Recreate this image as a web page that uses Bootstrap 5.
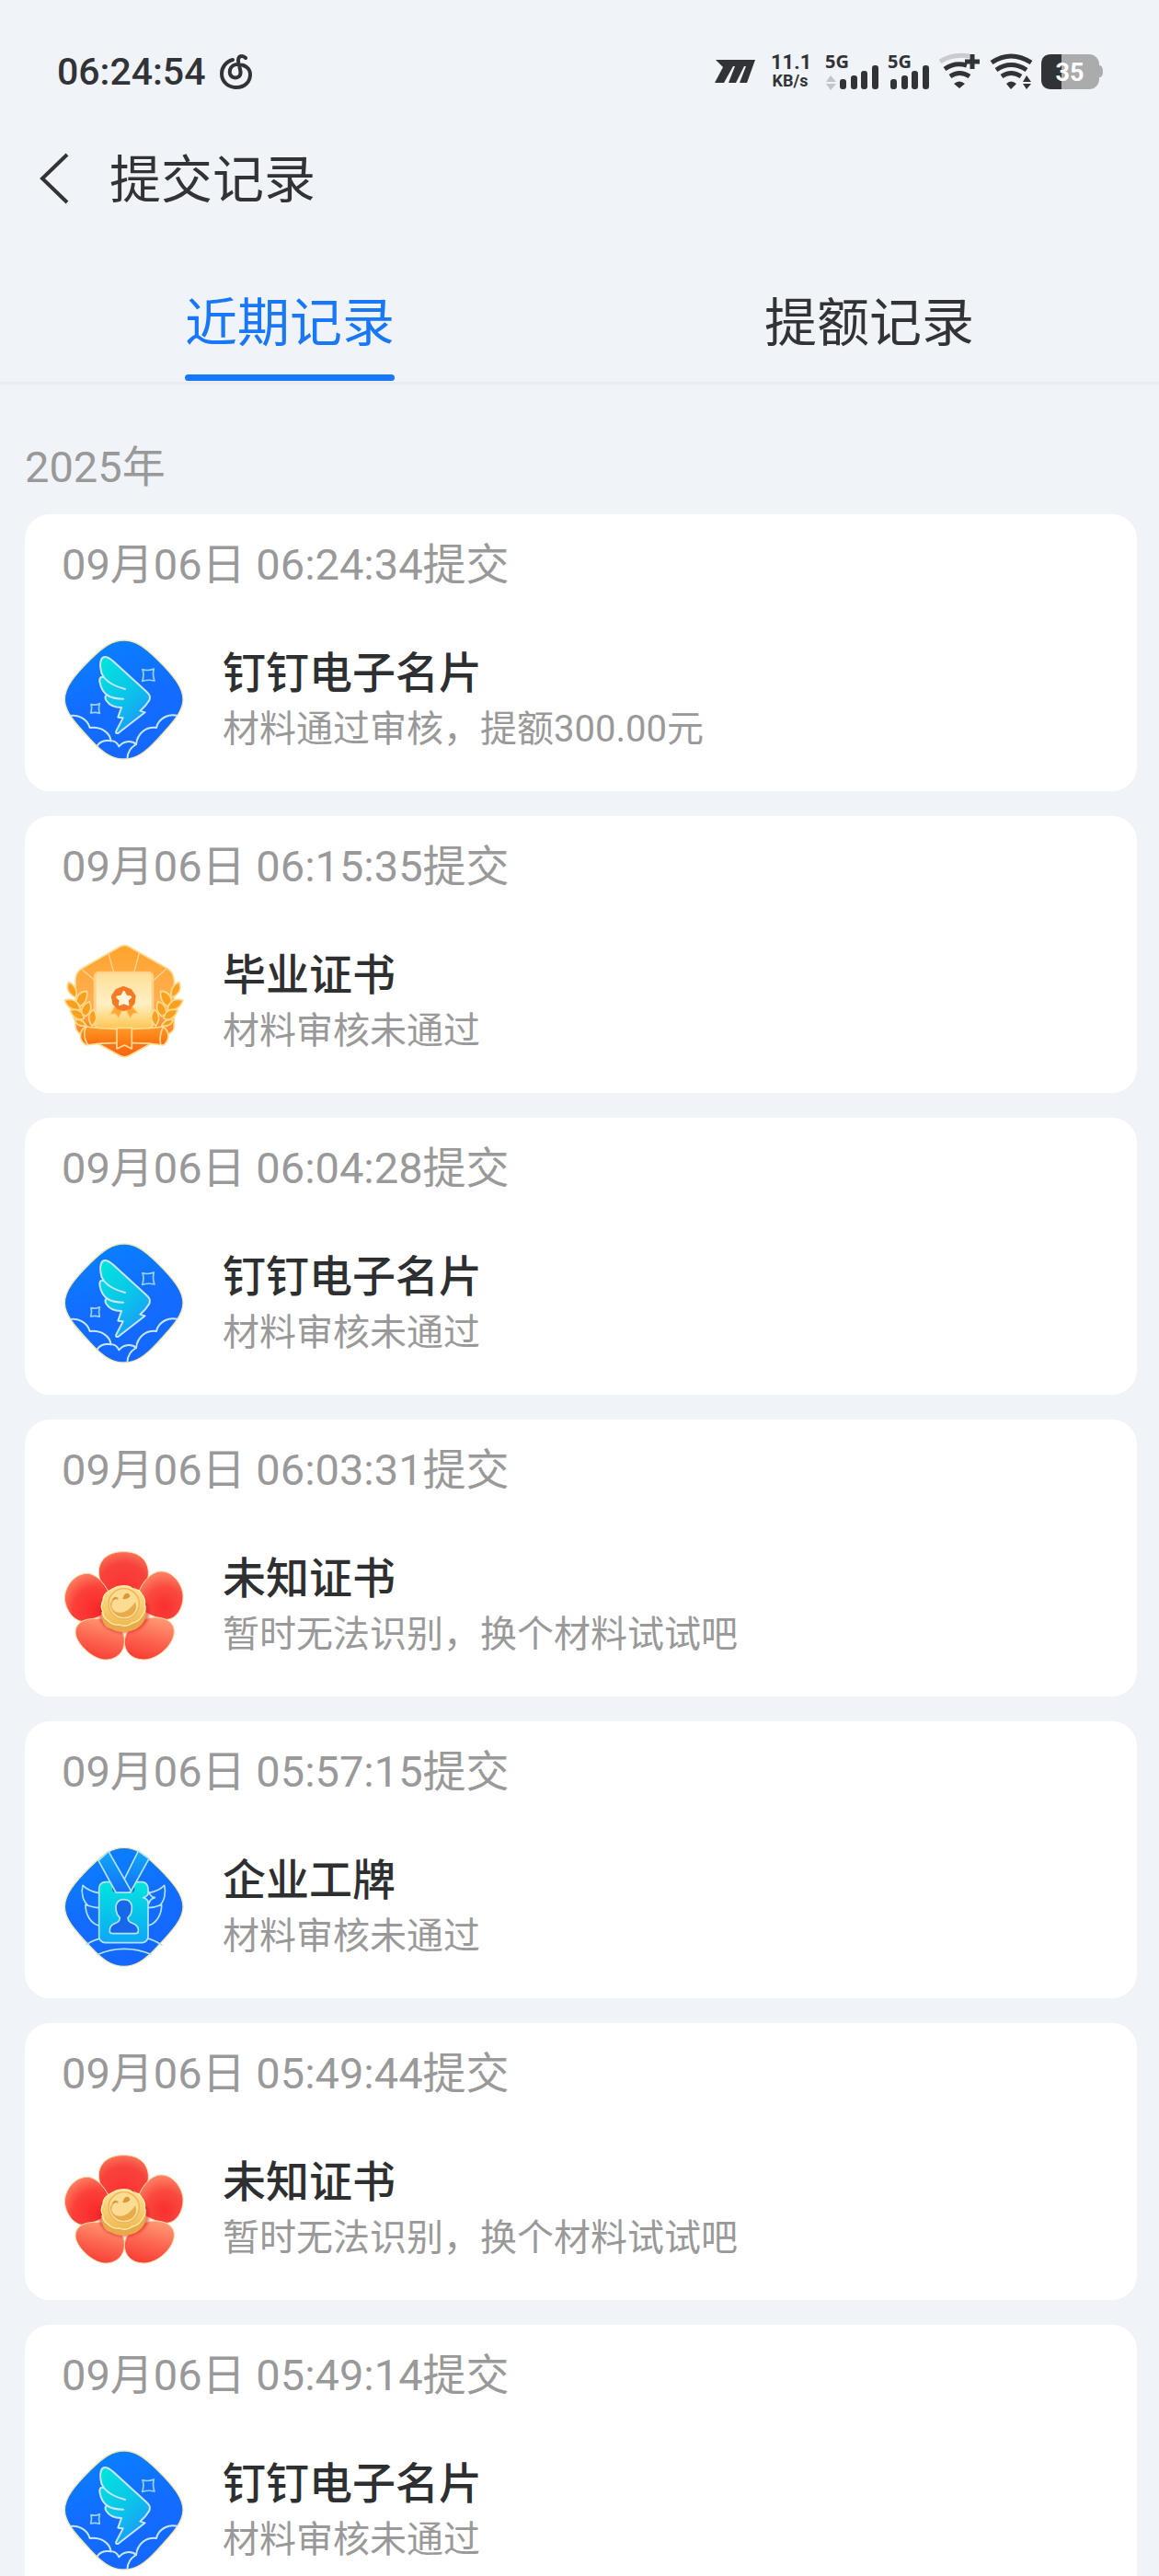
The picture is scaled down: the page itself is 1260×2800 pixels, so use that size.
<!DOCTYPE html>
<html lang="zh-CN">
<head>
<meta charset="utf-8">
<meta name="viewport" content="width=device-width, initial-scale=1">
<title>提交记录</title>
<link href="https://cdn.jsdelivr.net/npm/bootstrap@5.3.0/dist/css/bootstrap.min.css" rel="stylesheet">
<style>
  :root { --ink: #323336; --soft: #999; --page: #f0f3f8; --brand: #1878f8; }
  body { background: var(--page); color: var(--ink); font-family: Roboto, "Noto Sans CJK SC", sans-serif; }
  .screen { height: 100vh; }
  .status-bar { padding: 54px 64px 42px 62px; line-height: 48px; }
  .clock { font-size: 41px; font-weight: 500; }
  .status-bar svg { display: block; }
  .rate { font-weight: 700; line-height: 20px; width: 42px; }
  .rate-num { font-size: 22px; }
  .rate-unit { font-size: 18px; }
  .app-bar { height: 100px; padding-left: 42px; gap: 42px; }
  .app-title { font-size: 56px; line-height: 80px; padding-top: 4px; font-weight: 400; }
  .back-btn { line-height: 0; color: inherit; }
  .tab-strip { border-bottom: 3px solid #eaecf2; padding-bottom: 1px; }
  .tab-strip .nav-link { font-size: 57px; line-height: 80px; padding: 68px 0 15px; border-radius: 0; color: var(--ink); background: none; position: relative; }
  .tab-strip .nav-link.active { color: var(--brand); background: none; }
  .tab-strip .nav-item { padding-bottom: 7px; }
  .tab-strip .nav-link.active::after { content: ""; position: absolute; left: 0; right: 0; top: 100%; height: 7px; border-radius: 4px; background: var(--brand); }
  .records { padding: 58px 24px 27px 27px; scrollbar-width: none; }
  .records::-webkit-scrollbar { display: none; }
  .year-label { font-size: 47px; line-height: 64px; margin-bottom: 19px; color: var(--soft); font-weight: 400; }
  .record-list { gap: 27px; }
  .record { border: 0; border-radius: 27px; padding: 23px 40px 33px; }
  .record-time { font-size: 47px; line-height: 64px; margin-bottom: 47px; color: var(--soft); }
  .record-body { gap: 41px; }
  .record-text { padding-top: 4px; }
  .record-icon { width: 134px; height: 134px; flex: none; }
  .record-name { font-size: 47px; line-height: 61px; font-weight: 500; color: #2e2f31; margin: 0; }
  .record-note { font-size: 40px; line-height: 61px; color: var(--soft); margin: 0; }
</style>
</head>
<body>
<svg width="0" height="0" class="position-absolute" aria-hidden="true">
  <defs>
    <linearGradient id="gBlue" x1="0" y1="0" x2=".3" y2="1"><stop offset="0" stop-color="#0684ff"/><stop offset=".55" stop-color="#126eff"/><stop offset="1" stop-color="#1468ff"/></linearGradient>
    <linearGradient id="gWing" x1="0" y1="0" x2=".6" y2="1"><stop offset="0" stop-color="#02e6dc"/><stop offset=".6" stop-color="#0bc4ea"/><stop offset="1" stop-color="#1a9cf6"/></linearGradient>
    <linearGradient id="gBadge" x1="0" y1="0" x2="0" y2="1"><stop offset="0" stop-color="#00e5dc"/><stop offset="1" stop-color="#0fa6f8"/></linearGradient>
    <linearGradient id="gStrap" x1="0" y1="0" x2="0" y2="1"><stop offset="0" stop-color="#12a8f6"/><stop offset="1" stop-color="#1470f8"/></linearGradient>
    <linearGradient id="gHex" x1="0" y1="0" x2="0" y2="1"><stop offset="0" stop-color="#ffa42c"/><stop offset=".5" stop-color="#ffae52"/><stop offset="1" stop-color="#f9640c"/></linearGradient>
    <linearGradient id="gPaper" x1="0" y1="0" x2="0" y2="1"><stop offset="0" stop-color="#ffdf98"/><stop offset=".55" stop-color="#fff0c4"/><stop offset="1" stop-color="#ffc650"/></linearGradient>
    <linearGradient id="gRoll" x1="0" y1="0" x2="0" y2="1"><stop offset="0" stop-color="#ff9a26"/><stop offset="1" stop-color="#fb6f0c"/></linearGradient>
    <radialGradient id="gPetalTop" cx=".5" cy=".75" r=".8"><stop offset="0" stop-color="#fc3434"/><stop offset=".6" stop-color="#f8423c"/><stop offset="1" stop-color="#fb7a5c"/></radialGradient>
    <radialGradient id="gPetalL" cx=".65" cy=".75" r=".85"><stop offset="0" stop-color="#f92a2c"/><stop offset=".55" stop-color="#fb403a"/><stop offset="1" stop-color="#fd8c66"/></radialGradient>
    <radialGradient id="gPetalR" cx=".6" cy=".75" r=".85"><stop offset="0" stop-color="#f92e2f"/><stop offset=".5" stop-color="#fa4a40"/><stop offset="1" stop-color="#fd9a74"/></radialGradient>
    <linearGradient id="gPetalLow" x1=".6" y1="0" x2=".3" y2="1"><stop offset="0" stop-color="#ff9874"/><stop offset=".5" stop-color="#fc6650"/><stop offset="1" stop-color="#f83c34"/></linearGradient>
    <linearGradient id="gCoin" x1="0" y1="0" x2="0" y2="1"><stop offset="0" stop-color="#ffe496"/><stop offset="1" stop-color="#f0b850"/></linearGradient>
    <filter id="soften" x="-10%" y="-10%" width="120%" height="120%"><feGaussianBlur stdDeviation="5"/></filter>

    <path id="rhomb" d="M224 33C262 33 290 53 333 95C385 146 417 186 417 226C417 264 386 300 333 356C292 401 262 420 224 420C186 420 156 401 115 356C62 300 31 264 31 226C31 186 63 146 115 95C158 53 186 33 224 33Z"/>
    <clipPath id="rhombClip"><use href="#rhomb"/></clipPath>

    <symbol id="icWing" viewBox="21 24 402 402">
      <use href="#rhomb" fill="url(#gBlue)" stroke="#f4e8b4" stroke-width="4"/>
      <g fill="none" stroke="#c8e6fa" stroke-width="6" stroke-linejoin="round" stroke-linecap="round">
        <g clip-path="url(#rhombClip)">
          <path d="M40 281C72 272 104 288 113 318C150 314 180 334 181 361C192 360 202 367 208 379C222 361 248 358 264 372"/>
          <path d="M136 382C140 364 160 358 181 361"/>
          <path d="M235 424C234 400 244 384 264 372C268 336 296 314 330 318C338 286 370 268 412 282"/>
        </g>
        <path fill="url(#gWing)" d="M164 87C150 86 145 104 148 124C149 137 153 146 158 153C146 150 143 160 146 172C150 191 159 204 170 212C163 212 161 219 166 228C176 245 194 252 216 252L205 284L221 286L199 329C196 337 202 338 208 334L293 268L277 263C289 253 300 240 307 228C312 215 307 209 296 199L190 102C180 93 172 88 164 87Z"/>
        <path d="M158 153C174 174 198 184 228 192M170 212C184 222 204 224 222 224"/>
        <path stroke="#9fd0fa" stroke-width="5" d="M285 128Q303 134 322 126Q316 145 324 165Q304 160 284 166Q291 147 285 128ZM117 242Q131 246 145 239Q140 255 145 271Q130 266 116 270Q121 256 117 242Z"/>
      </g>
    </symbol>

    <symbol id="icPass" viewBox="21 32 402 402">
      <g transform="translate(0 9)"><use href="#rhomb" fill="url(#gBlue)" stroke="#f4e8b4" stroke-width="4"/></g>
      <g fill="none" stroke="#b4e4f4" stroke-width="5" stroke-linejoin="round" stroke-linecap="round">
        <path d="M101 358C120 346 138 339 158 336M348 360C332 348 312 340 293 336M140 390C192 366 258 366 312 390"/>
        <path d="M143 190C122 186 103 178 90 165C83 190 91 218 108 231M143 238C126 238 112 233 99 228C98 262 118 290 143 296M303 190C325 186 343 178 356 165C363 190 355 218 340 231M303 238C320 238 336 233 347 228C348 262 328 290 303 296"/>
        <rect x="143" y="154" width="160" height="198" rx="20" fill="url(#gBadge)"/>
        <path fill="#1761dc" d="M186 172Q184 188 199 188H247Q261 188 259 172Z" stroke="none"/>
        <path fill="url(#gStrap)" d="M271 53L306 78L245 188H204Z"/>
        <path fill="url(#gStrap)" d="M141 84L174 54L248 184L240 188H198Z"/>
        <path fill="#1767ea" d="M224 211C207 211 197 222 198 240C199 256 204 264 211 270C211 282 205 285 194 289C181 294 177 303 178 316Q179 322 188 322H262Q271 322 271 314C272 302 266 294 254 289C243 285 237 282 237 270C245 264 250 256 250 240C251 222 241 211 224 211Z"/>
        <path fill="#1478f6" d="M306 186Q309 202 325 205Q309 209 306 224Q302 209 287 205Q302 202 306 186Z"/>
      </g>
    </symbol>

    <symbol id="icDiploma" viewBox="21 33 402 402">
      <path d="M211 57Q226 49 241 57L366 128Q386 140 388 166V320Q386 334 368 343L242 412Q226 421 210 412L84 343Q68 334 66 316V166Q66 142 84 130Z" fill="url(#gHex)" stroke="#ffdc90" stroke-width="5"/>
      <path d="M174 78L190 138M274 78L258 138M88 132L128 166M362 130L322 166" stroke="#ffd48c" stroke-width="4"/>
      <rect x="125" y="137" width="197" height="190" rx="18" fill="#ffd288"/>
      <rect x="134" y="144" width="180" height="180" rx="14" fill="url(#gPaper)"/>
      <path fill="#ffa638" stroke="#ffd277" stroke-width="4" stroke-linejoin="round" d="M194 252L178 278L196 276L206 292L220 262ZM252 252L270 274L254 276L244 291L230 262Z"/>
      <path fill="#f57a24" stroke="#f57a24" stroke-width="8" stroke-linejoin="round" d="M223 190L246 199L259 218L256 241L242 257L223 263L204 257L190 241L187 218L200 199Z"/>
      <path fill="#fff6dc" stroke="#fff6dc" stroke-width="7" stroke-linejoin="round" d="M224 204L231 218L246 221L235 232L238 246L224 240L210 246L213 232L202 221L217 218Z"/>
      <g id="laurel" fill="#fb9f1e" stroke="#ffd98c" stroke-width="5" stroke-linejoin="round">
        <path d="M84 316Q64 304 58 282Q80 286 92 302Z"/>
        <path d="M102 316Q68 318 64 296Q86 288 102 316Z"/>
        <path d="M68 223Q30 205 44 172Q76 188 68 223Z"/>
        <path d="M68 236Q72 202 104 202Q108 234 82 252Z"/>
        <path d="M82 262Q44 270 31 232Q72 220 82 262Z"/>
        <path d="M86 276Q82 246 112 236Q126 264 100 284Z"/>
        <path d="M94 292Q64 302 48 264Q88 254 94 292Z"/>
        <path d="M120 316Q98 284 124 262Q146 292 120 316Z"/>
      </g>
      <use href="#laurel" transform="translate(448 0) scale(-1 1)"/>
      <path fill="url(#gRoll)" stroke="#ffdc94" stroke-width="5" stroke-linejoin="round" d="M100 318Q150 325 198 325H252Q304 325 352 318Q369 330 369 348Q368 366 354 378Q304 371 252 371H198Q150 371 100 378Q82 366 82 348Q82 326 100 318Z"/>
      <path fill="none" stroke="#ffdc94" stroke-width="5" d="M100 318Q88 348 106 377M352 318Q338 348 344 377"/>
      <path fill="url(#gRoll)" stroke="#ffdc94" stroke-width="5" stroke-linejoin="round" d="M201 322H250V390L226 378L201 390Z"/>
    </symbol>

    <symbol id="icFlower" viewBox="21 21 402 402">
      <g stroke="#ffd9a0" stroke-width="3">
        <path fill="url(#gPetalTop)" d="M224 50C278 50 304 82 304 120C304 150 284 190 224 192C164 190 142 152 142 114C144 74 174 50 224 50Z"/>
        <path fill="url(#gPetalL)" d="M104 121C134 121 172 160 184 210C186 250 120 276 84 277C50 268 30 226 31 198C34 160 64 122 104 121Z"/>
        <path fill="url(#gPetalR)" d="M346 114C384 114 416 158 417 194C418 232 396 268 366 271C326 270 268 238 264 214C270 166 306 114 346 114Z"/>
        <path fill="url(#gPetalLow)" d="M130 268C176 266 226 300 226 336C228 380 196 404 160 402C118 398 66 346 66 312C66 284 92 268 130 268Z"/>
        <path fill="url(#gPetalLow)" d="M330 264C366 266 390 284 388 312C386 352 338 400 290 402C250 402 224 376 226 340C230 300 276 264 330 264Z"/>
      </g>
      <ellipse cx="224" cy="246" rx="84" ry="70" fill="#e01c22" opacity=".6" filter="url(#soften)"/>
      <path fill="#e9a94a" d="M150 246Q152 298 184 302Q212 318 248 308Q284 300 296 262L296 226Z"/>
      <path fill="url(#gCoin)" stroke="#ffeeb0" stroke-width="4" d="M222 161Q240 160 252 170Q274 172 282 188Q296 204 292 222Q298 242 284 258Q274 278 252 282Q232 298 210 288Q186 290 172 274Q154 264 155 244Q146 228 156 208Q156 188 176 178Q198 162 222 161Z"/>
      <circle cx="224" cy="220" r="50" fill="#fbdc92" stroke="#eab45a" stroke-width="4"/>
      <path d="M206 200Q182 206 184 230Q190 248 212 248Q236 250 262 214Q270 240 250 256Q224 272 198 256Q178 238 180 218Q188 198 206 200Z" fill="#e8ab4c"/>
      <path d="M188 206Q196 194 204 204M228 190Q240 182 242 196Q234 204 222 202Z" stroke="#dd983a" stroke-width="4" fill="#dd983a" stroke-linecap="round"/>
    </symbol>
  </defs>
</svg>

<div class="screen d-flex flex-column overflow-hidden">
  <div class="status-bar d-flex flex-shrink-0 justify-content-between align-items-center">
    <div class="d-flex align-items-center gap-3">
      <span class="clock">06:24:54</span>
      <svg width="36" height="40" viewBox="0 0 36 40" fill="none" stroke="#323336" stroke-width="4" stroke-linecap="round" aria-hidden="true">
        <path d="M14 7C6 9 2 16 2 22C2 31 9 37 18 37C27 37 33 31 33 23C33 16 27 12 19 12C13 12 10 17 11 22C12 26 17 28 21 25C24 22 22 18 21 13C19 7 20 3 24 3C26 3 27 4 28 5"/>
      </svg>
    </div>
    <div class="d-flex align-items-center">
      <svg width="46" height="28" viewBox="0 0 46 28" class="me-3" fill="#323336" aria-hidden="true">
        <path d="M2 1H45L36 26H28L35 8H33L24 26H16L23 8H21L11 26H1L10 9Z"/>
      </svg>
      <div class="rate d-flex flex-column text-center me-3">
        <span class="rate-num">11.1</span>
        <span class="rate-unit">KB/s</span>
      </div>
      <svg width="300" height="42" viewBox="896 57 300 42" overflow="visible" fill="#323336" role="img" aria-label="5G, Wi-Fi, 35%">
        <g font-family="Noto Sans, sans-serif" font-weight="700" font-size="20"><text x="897" y="74">5G</text><text x="965" y="74">5G</text></g>
        <path fill="#c3c5ca" d="M903 82L909 89H898ZM903 98L898 91H909Z"/>
        <g id="bars"><rect x="913" y="86" width="7" height="11" rx="3"/><rect x="925" y="82" width="7" height="15" rx="3"/><rect x="936" y="77" width="7" height="20" rx="3"/><rect x="948" y="71" width="7" height="26" rx="3"/></g>
        <use href="#bars" x="55"/>
        <g fill="none" stroke="#323336" stroke-width="5">
          <path stroke="#c9cbd0" d="M1022 67Q1036 58 1054 61"/>
          <path d="M1027 75Q1038 67 1051 71M1033 83Q1043 76 1054 83M1049 67H1065M1057 59V75"/>
          <path d="M1078 68Q1099 54 1121 68M1083 76Q1099 65 1116 76M1089 83Q1099 76 1110 83"/>
        </g>
        <path d="M1037 91Q1043 86 1049 91L1043 96ZM1094 91Q1099 86 1105 91L1099 97ZM1116 82L1121 89H1112ZM1116 97L1112 91H1121Z"/>
        <rect x="1132" y="59" width="63" height="38" rx="11" fill="#aaabad"/>
        <path fill="#aaabad" d="M1195 71Q1199 71 1199 78Q1199 84 1195 84Z"/>
        <path d="M1154 59H1143Q1132 59 1132 70V86Q1132 97 1143 97H1154Z"/>
        <text x="1163" y="88" text-anchor="middle" fill="#fff" font-size="27" font-weight="700" font-family="Roboto, sans-serif">35</text>
      </svg>
    </div>
  </div>

  <header class="app-bar d-flex flex-shrink-0 align-items-center">
    <button type="button" class="btn p-0 border-0 back-btn" aria-label="返回">
      <svg width="35" height="56" viewBox="0 0 35 56" fill="none" stroke="currentColor" stroke-width="4"><path d="M31 2L4 28L31 54"/></svg>
    </button>
    <h1 class="app-title m-0">提交记录</h1>
  </header>

  <ul class="nav nav-pills nav-fill tab-strip flex-shrink-0" role="tablist">
    <li class="nav-item d-flex justify-content-center w-50" role="presentation"><button type="button" class="nav-link active flex-grow-0 w-auto" role="tab" aria-selected="true">近期记录</button></li>
    <li class="nav-item d-flex justify-content-center w-50" role="presentation"><button type="button" class="nav-link flex-grow-0 w-auto" role="tab" aria-selected="false">提额记录</button></li>
  </ul>

  <main class="records flex-grow-1 overflow-auto">
    <h2 class="year-label">2025年</h2>
    <div class="record-list d-flex flex-column">
      <article class="card record">
        <div class="record-time">09月06日 06:24:34提交</div>
        <div class="record-body d-flex align-items-center">
          <svg class="record-icon" aria-hidden="true"><use href="#icWing"/></svg>
          <div class="record-text"><h3 class="record-name">钉钉电子名片</h3><p class="record-note">材料通过审核，提额300.00元</p></div>
        </div>
      </article>
      <article class="card record">
        <div class="record-time">09月06日 06:15:35提交</div>
        <div class="record-body d-flex align-items-center">
          <svg class="record-icon" aria-hidden="true"><use href="#icDiploma"/></svg>
          <div class="record-text"><h3 class="record-name">毕业证书</h3><p class="record-note">材料审核未通过</p></div>
        </div>
      </article>
      <article class="card record">
        <div class="record-time">09月06日 06:04:28提交</div>
        <div class="record-body d-flex align-items-center">
          <svg class="record-icon" aria-hidden="true"><use href="#icWing"/></svg>
          <div class="record-text"><h3 class="record-name">钉钉电子名片</h3><p class="record-note">材料审核未通过</p></div>
        </div>
      </article>
      <article class="card record">
        <div class="record-time">09月06日 06:03:31提交</div>
        <div class="record-body d-flex align-items-center">
          <svg class="record-icon" aria-hidden="true"><use href="#icFlower"/></svg>
          <div class="record-text"><h3 class="record-name">未知证书</h3><p class="record-note">暂时无法识别，换个材料试试吧</p></div>
        </div>
      </article>
      <article class="card record">
        <div class="record-time">09月06日 05:57:15提交</div>
        <div class="record-body d-flex align-items-center">
          <svg class="record-icon" aria-hidden="true"><use href="#icPass"/></svg>
          <div class="record-text"><h3 class="record-name">企业工牌</h3><p class="record-note">材料审核未通过</p></div>
        </div>
      </article>
      <article class="card record">
        <div class="record-time">09月06日 05:49:44提交</div>
        <div class="record-body d-flex align-items-center">
          <svg class="record-icon" aria-hidden="true"><use href="#icFlower"/></svg>
          <div class="record-text"><h3 class="record-name">未知证书</h3><p class="record-note">暂时无法识别，换个材料试试吧</p></div>
        </div>
      </article>
      <article class="card record">
        <div class="record-time">09月06日 05:49:14提交</div>
        <div class="record-body d-flex align-items-center">
          <svg class="record-icon" aria-hidden="true"><use href="#icWing"/></svg>
          <div class="record-text"><h3 class="record-name">钉钉电子名片</h3><p class="record-note">材料审核未通过</p></div>
        </div>
      </article>
    </div>
  </main>
</div>
<script src="https://cdn.jsdelivr.net/npm/bootstrap@5.3.0/dist/js/bootstrap.bundle.min.js"></script>
</body>
</html>
